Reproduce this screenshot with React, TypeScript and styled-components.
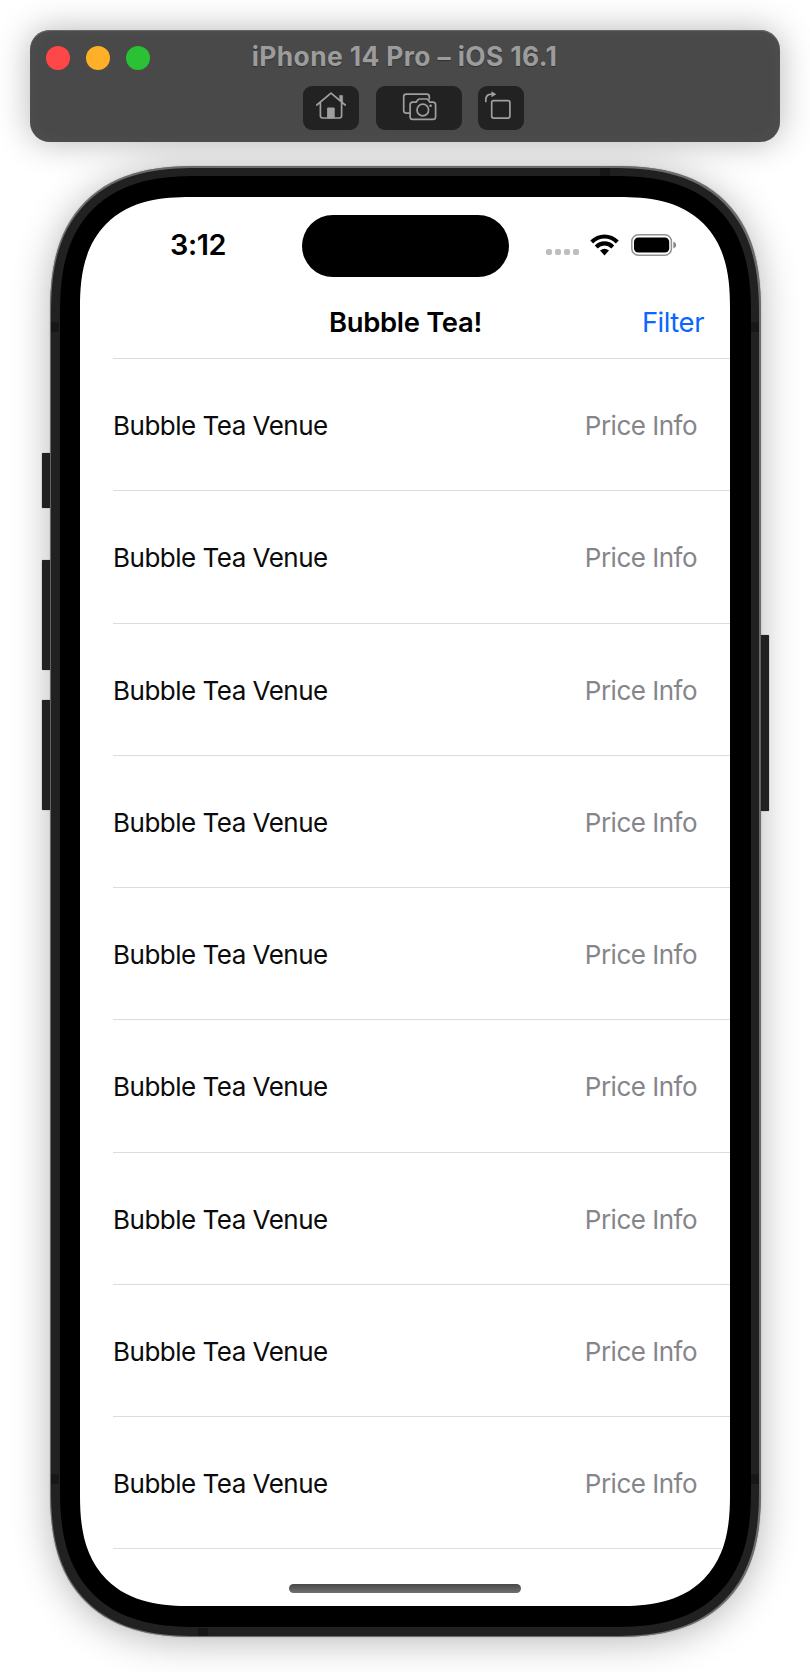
import React from 'react';
import styled, { createGlobalStyle } from 'styled-components';

const GlobalStyle = createGlobalStyle`
  *, *::before, *::after { box-sizing: border-box; }
  body {
    margin: 0;
    background: #fff;
    font-family: Inter, "Liberation Sans", sans-serif;
    -webkit-font-smoothing: antialiased;
  }
`;

const Page = styled.main`
  width: 810px;
  height: 1672px;
  padding-top: 30px;
  display: flex;
  flex-direction: column;
  align-items: center;
  overflow: hidden;
  background: #fff;
`;

const WindowBar = styled.header`
  z-index: 1;
  width: 750px;
  height: 112px;
  flex: none;
  display: flex;
  flex-direction: column;
  border-radius: 20px;
  background: #494949;
  box-shadow: inset 0 1px 1px #6a6a6a, inset 0 0 22px rgba(255, 255, 255, 0.03),
    0 0 34px rgba(0, 0, 0, 0.29);
`;

const TitleRow = styled.div`
  display: grid;
  grid-template-columns: 1fr auto 1fr;
  align-items: center;
  height: 52px;
  padding: 0 17px 0 16px;
`;

const Lights = styled.div`
  display: flex;
  gap: 16px;
  padding-top: 4px;
`;

const Light = styled.span<{ $color: string }>`
  width: 24px;
  height: 24px;
  border-radius: 50%;
  background: ${(p) => p.$color};
`;

const WindowTitle = styled.h1`
  margin: 0;
  color: #9c9c9c;
  font-size: 26.4px;
  line-height: 52px;
  font-weight: 700;
  letter-spacing: 0.38px;
  white-space: nowrap;
  text-shadow: 0 1px 1px rgba(0, 0, 0, 0.35);
`;

const Tools = styled.div`
  display: flex;
  margin: 4px 0 0 273px;
`;

const ToolButton = styled.button<{ $width: number; $gap?: number }>`
  width: ${(p) => p.$width}px;
  height: 44px;
  margin: 0 0 0 ${(p) => p.$gap ?? 0}px;
  padding: 0;
  display: flex;
  border: 0;
  border-radius: 9px;
  background: #222;
  color: #9f9f9f;

  svg {
    display: block;
    width: 100%;
    height: 44px;
    fill: none;
    stroke: currentColor;
    stroke-width: 1.7;
    stroke-linecap: round;
    stroke-linejoin: round;
  }
`;

const Phone = styled.section`
  position: relative;
  width: 711px;
  height: 1471px;
  flex: none;
  margin-top: 24px;
`;

const Rim = styled.div`
  height: 100%;
  padding: 1.5px;
  border-radius: 121px;
  background: #6c6c6c;
  box-shadow: 0 0 1px rgba(0, 0, 0, 0.5), 0 4px 38px rgba(0, 0, 0, 0.29);
  @supports (corner-shape: superellipse(1.3)) {
    border-radius: 148px;
    corner-shape: superellipse(1.34);
  }
`;

const Band = styled.div`
  height: 100%;
  padding: 8.5px;
  border-radius: 120px;
  background: #212121;
  @supports (corner-shape: superellipse(1.3)) {
    border-radius: 147px;
    corner-shape: superellipse(1.34);
  }
`;

const Bezel = styled.div`
  height: 100%;
  padding: 21px 20.5px;
  border-radius: 111px;
  background: #000;
  @supports (corner-shape: superellipse(1.3)) {
    border-radius: 138px;
    corner-shape: superellipse(1.34);
  }
`;

const Screen = styled.div`
  height: 100%;
  display: flex;
  flex-direction: column;
  overflow: hidden;
  border-radius: 88px;
  background: #fff;
  @supports (corner-shape: superellipse(1.3)) {
    border-radius: 111px;
    corner-shape: superellipse(1.34);
  }
`;

/* Antenna breaks and hardware keys sit on top of the metal band. */
const Seam = styled.span<{ $x: number; $y: number; $flat?: boolean }>`
  position: absolute;
  left: ${(p) => p.$x}px;
  top: ${(p) => p.$y}px;
  width: ${(p) => (p.$flat ? 10 : 8)}px;
  height: ${(p) => (p.$flat ? 8 : 10)}px;
  background: #171717;
`;

const SideKey = styled.span<{ $top: number; $height: number; $right?: boolean }>`
  position: absolute;
  top: ${(p) => p.$top}px;
  ${(p) => (p.$right ? 'right: -8px;' : 'left: -8px;')}
  width: 8px;
  height: ${(p) => p.$height}px;
  border-radius: ${(p) => (p.$right ? '0 1px 1px 0' : '1px 0 0 1px')};
  background: #212121;
  box-shadow: 0 0 1px rgba(0, 0, 0, 0.8);
`;

const StatusBar = styled.div`
  display: grid;
  grid-template-columns: 221.5px 207px 1fr;
  height: 98px;
  padding-top: 18px;
  flex: none;
`;

const Clock = styled.time`
  padding-left: 90px;
  font-size: 28.8px;
  line-height: 60px;
  font-weight: 600;
  letter-spacing: -0.4px;
`;

const Island = styled.div`
  height: 61.5px;
  border-radius: 31px;
  background: #000;
`;

const Indicators = styled.div`
  display: flex;
  align-items: center;
  height: 59px;
  padding-left: 37px;

  svg { display: block; flex: none; }
`;

const Signal = styled.div`
  display: flex;
  gap: 3px;
  padding-top: 14px;
  margin-right: 11px;

  i {
    width: 6px;
    height: 6px;
    border-radius: 2px;
    background: #bebebe;
  }
`;

const NavBar = styled.nav`
  display: grid;
  grid-template-columns: 1fr auto 1fr;
  height: 63px;
  flex: none;
  padding: 0 26px 0 27px;
  line-height: 55px;
  font-size: 27.4px;
`;

const NavTitle = styled.h2`
  grid-column: 2;
  margin: 0;
  font-size: inherit;
  font-weight: 600;
  letter-spacing: -0.3px;
`;

const FilterButton = styled.button`
  justify-self: end;
  height: 55px;
  padding: 0;
  border: 0;
  background: none;
  color: #0a66ff;
  font: inherit;
  letter-spacing: -0.45px;
`;

const List = styled.ul`
  margin: 0 0 0 33px;
  padding: 0;
  list-style: none;
  border-bottom: 1px solid #dedee0;
  flex: none;
`;

const Row = styled.li`
  display: flex;
  justify-content: space-between;
  align-items: center;
  height: 132.27px;
  padding: 2px 33px 0 0;
  border-top: 1px solid #dcdcde;
  font-size: 26px;
  letter-spacing: -0.5px;
`;

const Venue = styled.span`
  color: #0b0b0b;
`;

const Price = styled.span`
  color: #85858a;
`;

const HomeIndicator = styled.div`
  width: 232px;
  height: 9px;
  margin: 35px auto 0;
  border-radius: 5px;
  background: linear-gradient(#484848, #707070);
`;

const HomeIcon = () => (
  <svg viewBox="0 0 56 44">
    <path d="M13.8 19 28 7.2 42.2 19M17.4 17v12.8q0 2.2 2.2 2.2h16.8q2.2 0 2.2-2.2V17" />
    <path d="M36.8 9.4h2.8v7l-2.8-2.4Z" fill="currentColor" strokeWidth=".6" />
    <path d="M25 22h6.2v10H25z" fill="currentColor" strokeWidth="1" />
  </svg>
);

const CameraIcon = () => (
  <svg viewBox="0 0 86 44">
    <path d="M33.5 27.2h-3.2q-2.6 0-2.6-2.6V10.8q0-2.6 2.6-2.6h20.4q2.6 0 2.6 2.6v2" />
    <path d="M36.8 16.2h3.3l1.8-2.4q.6-.8 1.6-.8h7q1 0 1.6.8l1.8 2.4h3q2.7 0 2.7 2.7v11.8q0 2.7-2.7 2.7H36.8q-2.7 0-2.7-2.7V18.9q0-2.7 2.7-2.7Z" />
    <circle cx="46.8" cy="24" r="5.8" />
    <circle cx="54.6" cy="19.8" r="1.3" fill="currentColor" stroke="none" />
  </svg>
);

const RotateIcon = () => (
  <svg viewBox="0 0 46 44">
    <rect x="13.7" y="14.7" width="18.2" height="17.4" rx="2" />
    <path d="M7.8 15.5V13.8q0-5.6 6-5.6" />
    <path d="m13.5 5.2 4.8 3-4.8 3Z" fill="currentColor" stroke="none" />
  </svg>
);

const WifiIcon = () => (
  <svg width="29" height="22" viewBox="0 0 29 22" fill="none" stroke="#000" strokeWidth="4.1">
    <path d="M1.7 8Q7.2 2.5 14.5 2.5T27.3 8" />
    <path d="M6.2 13q3.7-3.6 8.3-3.6t8.3 3.6" />
    <path d="M10 16.6Q14.5 13 19 16.6L14.5 21.6Z" fill="#000" stroke="none" />
  </svg>
);

const Battery = styled.svg`
  margin-left: 12px;
`;

const BatteryIcon = () => (
  <Battery width="46" height="22" viewBox="0 0 46 22">
    <rect x=".8" y=".8" width="39.6" height="20.4" rx="6.5" fill="none" stroke="#929292" strokeWidth="1.5" />
    <rect x="3" y="3.4" width="35.2" height="15.2" rx="4.3" />
    <path d="M42.4 7.5q2.8 1 2.8 3.5t-2.8 3.5Z" fill="#858585" />
  </Battery>
);

const venues = Array.from({ length: 9 }, (_, id) => ({
  id,
  name: 'Bubble Tea Venue',
  price: 'Price Info',
}));

export default function App() {
  return (
    <>
      <GlobalStyle />
      <Page>
        <WindowBar>
          <TitleRow>
            <Lights>
              <Light $color="#ff4747" />
              <Light $color="#ffaf28" />
              <Light $color="#2ac234" />
            </Lights>
            <WindowTitle>iPhone 14 Pro – iOS 16.1</WindowTitle>
          </TitleRow>
          <Tools>
            <ToolButton $width={56} aria-label="Home"><HomeIcon /></ToolButton>
            <ToolButton $width={86} $gap={17} aria-label="Screenshot"><CameraIcon /></ToolButton>
            <ToolButton $width={46} $gap={16} aria-label="Rotate"><RotateIcon /></ToolButton>
          </Tools>
        </WindowBar>

        <Phone>
          <Rim>
            <Band>
              <Bezel>
                <Screen>
                  <StatusBar>
                    <Clock>3:12</Clock>
                    <Island />
                    <Indicators>
                      <Signal><i /><i /><i /><i /></Signal>
                      <WifiIcon />
                      <BatteryIcon />
                    </Indicators>
                  </StatusBar>
                  <NavBar>
                    <NavTitle>Bubble Tea!</NavTitle>
                    <FilterButton>Filter</FilterButton>
                  </NavBar>
                  <List>
                    {venues.map((v) => (
                      <Row key={v.id}>
                        <Venue>{v.name}</Venue>
                        <Price>{v.price}</Price>
                      </Row>
                    ))}
                  </List>
                  <HomeIndicator />
                </Screen>
              </Bezel>
            </Band>
          </Rim>
          <SideKey $top={287} $height={55} />
          <SideKey $top={394} $height={110} />
          <SideKey $top={534} $height={110} />
          <SideKey $top={469} $height={176} $right />
          <Seam $x={550} $y={2} $flat />
          <Seam $x={1.5} $y={156} />
          <Seam $x={701.5} $y={156} />
          <Seam $x={1.5} $y={1308} />
          <Seam $x={701.5} $y={1308} />
          <Seam $x={148} $y={1461.5} $flat />
        </Phone>
      </Page>
    </>
  );
}
